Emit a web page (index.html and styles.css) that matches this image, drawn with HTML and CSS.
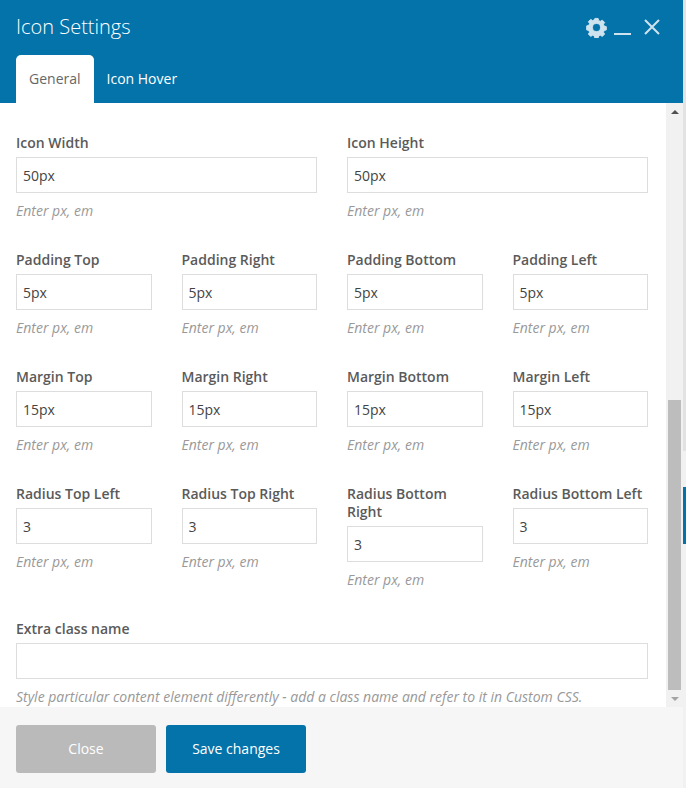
FILE: index.html
```html
<!DOCTYPE html>
<html>
<head>
    <title>Icon Settings</title>
    <meta charset="UTF-8">
    <link rel="stylesheet" href="styles.css">
</head>
<body>
    <div class="modal">
        <div class="modal-header">
            <div class="title-row">
                <h1>Icon Settings</h1>
                <div class="controls">
                    <svg class="gear" width="21" height="21" viewBox="0 0 22 22">
                        <path fill-rule="evenodd" d="M9.3 1.5h3.4l.6 2.3 1.8.7 2-1.2 2.4 2.4-1.2 2 .7 1.8 2.3.6v3.4l-2.3.6-.7 1.8 1.2 2-2.4 2.4-2-1.2-1.8.7-.6 2.3H9.3l-.6-2.3-1.8-.7-2 1.2-2.4-2.4 1.2-2-.7-1.8-2.3-.6V9.3l2.3-.6.7-1.8-1.2-2 2.4-2.4 2 1.2 1.8-.7zM11 6.8a4.2 4.2 0 1 0 0 8.4 4.2 4.2 0 0 0 0-8.4z"/>
                    </svg>
                    <span class="minimize"></span>
                    <svg class="close" width="16" height="16" viewBox="0 0 16 16">
                        <path d="M1 1l14 14M15 1L1 15"/>
                    </svg>
                </div>
            </div>
            <div class="tabs">
                <a class="tab active">General</a>
                <a class="tab">Icon Hover</a>
            </div>
        </div>

        <div class="modal-body">
            <div class="form-area">
                <div class="row">
                    <div class="field half">
                        <label>Icon Width</label>
                        <input type="text" value="50px">
                        <p class="hint">Enter px, em</p>
                    </div>
                    <div class="field half">
                        <label>Icon Height</label>
                        <input type="text" value="50px">
                        <p class="hint">Enter px, em</p>
                    </div>
                </div>
                <div class="row">
                    <div class="field">
                        <label>Padding Top</label>
                        <input type="text" value="5px">
                        <p class="hint">Enter px, em</p>
                    </div>
                    <div class="field">
                        <label>Padding Right</label>
                        <input type="text" value="5px">
                        <p class="hint">Enter px, em</p>
                    </div>
                    <div class="field">
                        <label>Padding Bottom</label>
                        <input type="text" value="5px">
                        <p class="hint">Enter px, em</p>
                    </div>
                    <div class="field">
                        <label>Padding Left</label>
                        <input type="text" value="5px">
                        <p class="hint">Enter px, em</p>
                    </div>
                </div>
                <div class="row">
                    <div class="field">
                        <label>Margin Top</label>
                        <input type="text" value="15px">
                        <p class="hint">Enter px, em</p>
                    </div>
                    <div class="field">
                        <label>Margin Right</label>
                        <input type="text" value="15px">
                        <p class="hint">Enter px, em</p>
                    </div>
                    <div class="field">
                        <label>Margin Bottom</label>
                        <input type="text" value="15px">
                        <p class="hint">Enter px, em</p>
                    </div>
                    <div class="field">
                        <label>Margin Left</label>
                        <input type="text" value="15px">
                        <p class="hint">Enter px, em</p>
                    </div>
                </div>
                <div class="row">
                    <div class="field">
                        <label>Radius Top Left</label>
                        <input type="text" value="3">
                        <p class="hint">Enter px, em</p>
                    </div>
                    <div class="field">
                        <label>Radius Top Right</label>
                        <input type="text" value="3">
                        <p class="hint">Enter px, em</p>
                    </div>
                    <div class="field">
                        <label>Radius Bottom Right</label>
                        <input type="text" value="3">
                        <p class="hint">Enter px, em</p>
                    </div>
                    <div class="field">
                        <label>Radius Bottom Left</label>
                        <input type="text" value="3">
                        <p class="hint">Enter px, em</p>
                    </div>
                </div>
                <div class="row">
                    <div class="field full">
                        <label>Extra class name</label>
                        <input type="text" value="">
                        <p class="hint">Style particular content element differently - add a class name and refer to it in Custom CSS.</p>
                    </div>
                </div>
            </div>
            <div class="scrollbar">
                <div class="arrow-up"></div>
                <div class="track"><div class="thumb"></div></div>
                <div class="arrow-down"></div>
            </div>
        </div>

        <div class="modal-footer">
            <button class="btn btn-close">Close</button>
            <button class="btn btn-save">Save changes</button>
        </div>
    </div>
    <div class="page-edge">
        <div class="edge-top"></div>
        <div class="edge-accent"></div>
    </div>
</body>
</html>
```

FILE: styles.css
```css
html, body {
  margin: 0;
  padding: 0;
}

body {
  display: flex;
  height: 788px;
  overflow: hidden;
  background-color: #fff;
  font-family: "Open Sans", sans-serif;
  color: #5a5a5a;
}

.modal {
  width: 683px;
  flex-shrink: 0;
  display: flex;
  flex-direction: column;
}

.page-edge {
  flex: 1;
  background-color: #f1f1f1;
}

.edge-top {
  height: 451px;
  background-color: #e2e2e2;
  margin-bottom: 36px;
}

.edge-accent {
  height: 57px;
  background-color: #0473aa;
}

.modal-header {
  height: 103px;
  background-color: #0473aa;
  padding: 0 16px;
  box-sizing: border-box;
}

.title-row {
  height: 55px;
  display: flex;
  justify-content: space-between;
  align-items: center;
}

h1 {
  margin: -2px 0 0;
  font-size: 20px;
  font-weight: 300;
  color: #fff;
}

.controls {
  display: flex;
  align-items: center;
  margin: -1px 7px 0 0;
}

.gear {
  fill: #cfe3ee;
  stroke: #cfe3ee;
  stroke-width: 1;
  stroke-linejoin: round;
}

.minimize {
  width: 17px;
  height: 2px;
  margin: 14px 13px 0 7px;
  background-color: #cfe3ee;
}

.close {
  fill: none;
  stroke: #cfe3ee;
  stroke-width: 2;
}

.tabs {
  display: flex;
}

.tab {
  height: 48px;
  line-height: 48px;
  padding: 0 13px;
  font-size: 14px;
  color: #fff;
  border-radius: 5px 5px 0 0;
}

.tab.active {
  background-color: #fff;
  color: #666;
}

.modal-body {
  height: 604px;
  display: flex;
}

.form-area {
  flex: 1;
  padding: 31px 0 0 16px;
  overflow: hidden;
}

.row {
  display: flex;
  gap: 30px;
  margin-bottom: 31px;
}

.field {
  width: 135.5px;
}

.field.half {
  width: 301px;
}

.field.full {
  width: 632px;
}

label {
  display: block;
  font-size: 14px;
  font-weight: 600;
  line-height: 18px;
  margin-bottom: 5px;
}

input {
  display: block;
  width: 100%;
  height: 36px;
  box-sizing: border-box;
  padding: 0 6px;
  border: 1px solid #ddd;
  font-family: inherit;
  font-size: 14px;
  color: #444;
}

.hint {
  margin: 9px 0 0;
  font-size: 14px;
  font-style: italic;
  line-height: 18px;
  white-space: nowrap;
  color: #999;
}

.scrollbar {
  width: 17px;
  flex-shrink: 0;
  display: flex;
  flex-direction: column;
  background-color: #f1f1f1;
}

.track {
  flex: 1;
  display: flex;
  flex-direction: column;
  justify-content: flex-end;
}

.thumb {
  height: 290px;
  margin: 0 2px;
  background-color: #bdbdbd;
}

.arrow-up,
.arrow-down {
  height: 17px;
  display: flex;
  justify-content: center;
  align-items: center;
}

.arrow-up::before {
  content: "";
  border: 4px solid transparent;
  border-top: 0;
  border-bottom: 4px solid #505050;
}

.arrow-down::before {
  content: "";
  border: 4px solid transparent;
  border-bottom: 0;
  border-top: 4px solid #a3a3a3;
}

.modal-footer {
  flex: 1;
  display: flex;
  gap: 10px;
  padding: 18px 16px 0;
  background-color: #f6f6f6;
}

.btn {
  width: 140px;
  height: 48px;
  padding: 0 0 2px;
  border: 0;
  border-radius: 3px;
  font-family: inherit;
  font-size: 14px;
  font-weight: 400;
}

.btn-close {
  background-color: #bababa;
  color: #fff;
}

.btn-save {
  background-color: #0473aa;
  color: #fff;
}
```
